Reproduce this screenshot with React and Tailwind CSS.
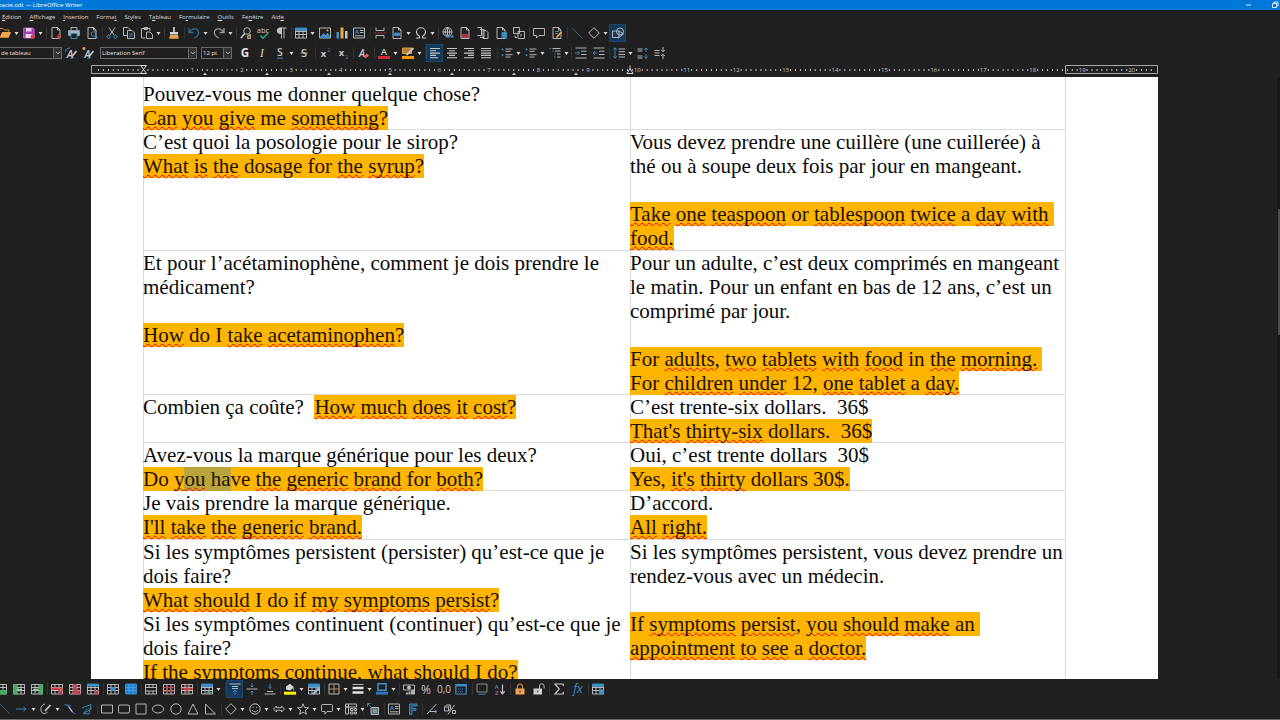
import React from "react";

const G = "#c6c6c6";
const B = "#3c8fc7";
const R = "#d0404c";

/* ---------- icon drawings, 12 x 12 ---------- */

const T = ({ x, y, s, c = G, w = 400, i, f = "Open Sans", children }) => (
  <text x={x} y={y} fontSize={s} fill={c} stroke="none" fontWeight={w} fontStyle={i ? "italic" : "normal"} textAnchor="middle" fontFamily={`"${f}", sans-serif`}>
    {children}
  </text>
);

const grid = (
  <path d="M.5 1.5h11v9.500h-11zM.5 4.500h11M.5 7.500h11M4 1.500v9.500M8 1.500v9.500" />
);
const doc = <path d="M2 .5h5.500L10 3v8.500H2zM7.500.5V3H10" />;
const lines = (a, b) => (
  <path d={`M1 1.500h10M${a} 3.800h${b}M1 6.100h10M${a} 8.400h${b}M1 10.700h10`} strokeWidth="1.100" />
);
const cross = <path d="M7.500 7l4 4.500M11.500 7l-4 4.500" stroke={R} strokeWidth="1.300" />;
const list = (
  <>
    <path d="M4.500 2h7M4.500 4.300h5M4.500 7.700h7M4.500 10h5" />
    <path d="M.5 2.500h2M.5 8.200h2M1.500 1.500v2M1.500 7.200v2" stroke={B} />
  </>
);

const ICONS = {
  open: (
    <>
      <path d="M0 10.500V1.500h4l1.500 1.500H10v2" stroke="#e8963a" />
      <path d="M.5 10.800L3 5h9l-2.300 5.800z" fill="#f0a54a" stroke="none" />
    </>
  ),
  save: (
    <>
      <path d="M.5 1h9.500l1.200 1.500V11H.5z" fill="#a33fae" stroke="#b95bc4" />
      <path d="M3 1h5.500v3.500H3zM2.500 7h7v4h-7z" fill="#e6d3ea" stroke="none" />
      <circle cx="9.800" cy="9.500" r="2.200" fill="#d9434f" stroke="none" />
    </>
  ),
  pdf: <>{doc}<path d="M9 6.500v4.500M7 9l2 2.200L11 9" stroke={R} strokeWidth="1.400" /></>,
  print: (
    <>
      <path d="M3 3V.5h6V3" />
      <path d="M.5 3.500h11v5H.5z" fill="#a5b5bf" stroke="#8fa5b2" />
      <path d="M3 6.500h6v5H3z" fill="#202020" stroke={B} />
    </>
  ),
  preview: <>{doc}<circle cx="7.500" cy="7" r="2.300" stroke={B} /><path d="M9.200 8.800l2.300 2.400" stroke={B} strokeWidth="1.300" /></>,
  cut: (
    <>
      <path d="M3 .5l5.300 8M9 .5l-5.300 8" />
      <circle cx="2.600" cy="9.800" r="1.600" stroke={B} />
      <circle cx="9.400" cy="9.800" r="1.600" stroke={B} />
    </>
  ),
  copy: <><path d="M.5.500h4.500l2 2V8.500H.5z" /><path d="M4.500 3.500h4.500l2.500 2.500v5.500h-7z" fill="#202020" /><path d="M6 7h4M6 9h4" stroke={B} /></>,
  paste: <><path d="M9 4V1.500H.5v9.500h4M3 2.500V.5h3.500v2z" /><path d="M5.500 5h3.500l2.500 2.500v4h-6z" /></>,
  brush: (
    <>
      <path d="M6 0v5" strokeWidth="1.800" />
      <path d="M2 5h8v2.500H2z" fill="#d8d8d8" stroke="none" />
      <path d="M2 8h8l.8 3.800H1.200z" fill="#f0a54a" stroke="none" />
    </>
  ),
  undo: <path d="M1 1v4.500h4.500M1 5.500C3.500 1.500 8 .8 10 3.500c2 3-1 6.500-4 7.500" stroke="#2f6c96" strokeWidth="1.300" />,
  redo: <path d="M11 1v4.500H6.500M11 5.500C8.500 1.500 4 .8 2 3.500c-2 3 1 6.500 4 7.500" stroke="#9a9a9a" strokeWidth="1.300" />,
  find: <><circle cx="7" cy="4" r="3.300" /><path d="M4.700 6.500L.8 11.200" strokeWidth="1.600" /><T x="9" y="11.800" s="7" w={700}>d</T></>,
  spell: <><T x="6" y="6" s="7.500">abc</T><path d="M3.500 8.500l2.500 2.700 5-5" stroke="#2fae74" strokeWidth="1.300" /></>,
  pilcrow: <><path d="M6.500 1v10.500M9 1v10.500M4.500 1h7" /><path d="M6.500 1H5a2.700 2.700 0 000 5.500h1.500z" fill={G} /></>,
  table: <>{grid}<path d="M.5 1h11v2.500H.5z" fill={B} stroke={B} /></>,
  image: <><path d="M.5 1h11v10H.5z" /><path d="M1 10.500l3.500-4 2 2 2-2.500 2.700 4.500z" fill={B} stroke={B} /><circle cx="8.500" cy="3.500" r="1" fill="#f0a54a" stroke="none" /></>,
  chart: <><path d="M.5 5h2.500v6.500H.5z" fill={B} stroke="none" /><path d="M4.500.500h3v11h-3z" fill="#f0a54a" stroke="none" /><path d="M9 4h2.500v7.500H9z" fill={G} stroke="none" /></>,
  textbox: <><path d="M.5 1h11v10H.5z" /><T x="4" y="7" s="6" c={B} w={700}>A</T><path d="M7 3.500h3.500M7 5.500h3.500M2 8.800h8.500" /></>,
  pagebreak: <><path d="M2 .5v3h8v-3M2 11.500v-3h8v3" /><path d="M.5 6h11" stroke={R} strokeDasharray="2 1" /></>,
  field: <>{doc}<path d="M3.500 6h5v2.500h-5z" fill={B} stroke={B} /></>,
  omega: <path d="M.8 11H4.500V9.300C2.700 8.300 1.500 6.800 1.500 5a4.500 4.200 0 019 0c0 1.800-1.200 3.300-3 4.300V11h3.700" strokeWidth="1.100" />,
  link: <><circle cx="5.500" cy="5" r="4.500" /><path d="M1 5h9M5.500.500v9M5.500.500C2.500 3 2.500 7 5.500 9.500M5.500.500C8.500 3 8.500 7 5.500 9.500" /><path d="M4.500 9.500h3M8.500 9.500h3" stroke={B} strokeWidth="2.200" /></>,
  footnote: <>{doc}<path d="M3.500 7.500h5.500v3H3.500z" fill="#8d3446" stroke={R} /></>,
  endnote: <path d="M.5.500h4v8h-4M3 2.500h4v8H3M6 3.500h3l2 2v6H6z" />,
  bookmark: <>{doc}<path d="M7 5.500h4.500v6L9.200 9.500 7 11.500z" fill={B} stroke={B} /></>,
  crossref: <><path d="M.5.500h6v6h-6zM5 4.500h6.500v7H5z" /><path d="M2 8.500v2h2M8 7v2.500" /></>,
  comment: <path d="M.5 1.500h11v7H6L3.500 11V8.500h-3z" />,
  track: <>{doc}<path d="M4 4.500h4M4 6.500h3" stroke={B} /><path d="M5.500 10.500l5-5.500" stroke="#f0a54a" strokeWidth="1.800" /></>,
  line: <path d="M1 1l10 10" stroke="#2f6c96" />,
  diamond: <path d="M6 .7L11.300 6 6 11.300.7 6z" />,
  shapes: <><path d="M.5 4h6.500v6.500H.5z" /><circle cx="8" cy="4.500" r="3.500" /><path d="M7 4l4.500 3-5 4" /></>,
  styleUpd: <><T x="5" y="10.500" s="11" i w={600}>A</T><path d="M7 9.500L11.500 4" strokeWidth="1.700" /><path d="M.5 5C.5 2 2 1 5 1M5.500 11.500c2 0 3-.5 3.500-1.500" stroke={B} /></>,
  styleNew: <><T x="5.500" y="10.500" s="10" i w={600}>A</T><path d="M7 9.500L11.500 4" strokeWidth="1.700" /><path d="M.5 1.500h3M2 0v3" stroke="#f0a54a" strokeWidth="1.600" /><path d="M5.500 11.500c2 0 3-.5 3.500-1.500" stroke={B} /></>,
  bold: <T x="6" y="10" s="11.500" c="#e4e4e4" w={700}>G</T>,
  italic: <T x="6" y="10" s="11.500" c="#d4d4d4" i f="Liberation Serif">I</T>,
  under: <><T x="6" y="9" s="10.500" w={600}>S</T><path d="M3 11.200h6" stroke={B} /></>,
  strike: <><T x="6" y="10" s="11" w={600}>S</T><path d="M2.500 6h7" /></>,
  sup: <><T x="4.500" y="10" s="9.500" w={700}>x</T><T x="10" y="5" s="5" c={B}>2</T></>,
  sub: <><T x="4.500" y="9" s="9.500" w={700}>x</T><T x="10" y="11.500" s="5" c={B}>2</T></>,
  clear: <><T x="5" y="9.500" s="10" i w={600}>A</T><path d="M6.500 9.500l3.500-3 2 2-3.500 3z" fill="#e0606c" stroke="none" /></>,
  color: <><T x="6" y="8" s="9.500" w={600}>A</T><path d="M0 10.500h12" stroke="#d32f3a" strokeWidth="3" /></>,
  mark: <><path d="M.5 1h9v5.500h-9z" fill="#b87f35" stroke="#f0a54a" /><path d="M4.500 8l7-7" strokeWidth="1.800" /><path d="M0 10.500h12" stroke="#ff9800" strokeWidth="3" /></>,
  left: <path d="M1 1.500h10M1 3.800h6M1 6.100h10M1 8.400h6M1 10.700h8" strokeWidth="1.100" />,
  center: lines(3, 6),
  right: lines(5, 6),
  justify: lines(1, 10),
  bullets: list,
  numbers: list,
  outline: <><path d="M3.500 1.500h8M6 4h5.500M8 7h3.500M8 10h3.500" /><path d="M.5 1.500h1.500M3 4h1.500M5 7h1.500M5 10h1.500" stroke={B} /></>,
  indent: <><path d="M.5 1h11M6 4.200h5.500M6 7.500h5.500M.5 11h11" /><path d="M0 6h4.500M2.500 4l2 2-2 2" stroke={B} /></>,
  outdent: <><path d="M.5 1h11M6 4.200h5.500M6 7.500h5.500M.5 11h11" /><path d="M0 6h4.500M2 4L0 6l2 2" stroke={B} /></>,
  spacing: <><path d="M5.500 2H12M5.500 4.700H12M5.500 7.400H12M5.500 10H12" /><path d="M2 .8v10.400M.3 2.800L2 .8l1.700 2M.3 9.200l1.700 2 1.700-2" stroke={B} /></>,
  paraInc: <><path d="M.5 2h5M.5 4h5M.5 9h5M.5 11h5" /><path d="M9 5V1M7.200 2.800L9 1l1.800 1.800M9 7v4.500M7.200 9.500L9 11.500l1.800-2" stroke={B} /></>,
  paraDec: <><path d="M.5 3.500h5M.5 6h5M.5 8.500h5" /><path d="M9 0v4.500M7.200 3L9 4.800 10.800 3M9 12V7.500M7.200 9L9 7.200 10.800 9" /></>,
  rowIns: <>{grid}<path d="M5 7h6.500v4.500H5z" fill="#3fae62" stroke="none" /></>,
  colBefore: <>{grid}<path d="M.2 1h3.500v10.500H.2z" fill="#3fae62" stroke="none" /><path d="M4 6.500h5M6 4.500l-2 2 2 2" stroke="#8fe0a6" /></>,
  colAfter: <>{grid}<path d="M8.300 1h3.500v10.500H8.300z" fill="#3fae62" stroke="none" /><path d="M2 6.500h5M5 4.500l2 2-2 2" stroke="#8fe0a6" /></>,
  rowDel: <>{grid}<path d="M.5 4.500h11v2.500H.5z" fill={R} stroke="none" />{cross}</>,
  colDel: <>{grid}<path d="M4.200 1h3.500v10.500H4.200z" fill={R} stroke="none" />{cross}</>,
  tableDel: <>{grid}<path d="M.5 1h11v2H.5z" fill={B} stroke={B} />{cross}</>,
  cellSel: <>{grid}<path d="M4 4.500h4v3H4z" fill={B} stroke={B} /></>,
  tableSel: <><path d="M.5 1h11v10H.5z" fill="#1f82d6" stroke={B} /><path d="M.5 4.500h11M.5 7.500h11M4 1v10M8 1v10" stroke="#3fa0ec" /></>,
  merge: <><path d="M.5 1.500h11v9.500h-11zM.5 4.500h11M.5 8h11M4 1.500v3M8 1.500v3M4 8v3M8 8v3" /></>,
  splitCell: <>{grid}<path d="M4 4.500h4v3.500H4zM.5 4.500h11M.5 8h11" stroke={R} /></>,
  splitTable: <>{grid}<path d="M0 6h12M6 1v10.500" stroke={R} strokeWidth="1.400" /></>,
  optimize: <>{grid}<path d="M.5 1h11v2.500H.5z" fill={B} stroke={B} /><path d="M6 9.500h5.500M7.500 8L6 9.500 7.500 11" stroke="#4fb3a3" /></>,
  vtop: <><path d="M.5 1h11M3 3.500h6M3 5.500h6" /><path d="M6 11.500V7M4 9l2-2 2 2" stroke={B} /></>,
  vmid: <><path d="M.5 6h11" /><path d="M6 0v4M4.500 2.500L6 4l1.500-1.500M6 12V8M4.500 9.500L6 8l1.500 1.500" stroke={B} /></>,
  vbot: <><path d="M.5 11h11M3 8.500h6" /><path d="M6 .5v5M4.300 4L6 5.500 7.700 4" stroke={B} /></>,
  fill: <><path d="M2 3.500L6 .8l4 3.500-4 3.200-4-1z" fill="#d8d8d8" stroke="none" /><path d="M9.500 4.500v3" stroke={B} strokeWidth="1.500" /><path d="M0 10.200h12" stroke="#fff200" strokeWidth="3" /></>,
  autofmt: <>{grid}<path d="M.5 1h11v3H.5z" fill={B} stroke={B} /><path d="M5 11l6-6" stroke="#8cc3e8" strokeWidth="2" /></>,
  borders: <><path d="M1 1h10v10H1z" /><path d="M6 1v10M1 6h10" stroke="#c9a27a" /></>,
  bstyle: <><path d="M.5 1.500h11" /><path d="M.5 5h11M.5 9.500h11" strokeWidth="2.500" stroke="#e0e0e0" /></>,
  bcolor: <><path d="M2 .8h8v6.500H2z" stroke={B} strokeWidth="1.500" /><path d="M0 10.200h12" stroke="#2a76c0" strokeWidth="3" /></>,
  currency: <><path d="M.5 2h11v5H.5z" /><circle cx="6" cy="4.500" r="1.500" fill={G} /><path d="M4 11.500V9.500M6.500 11.500V8.500M9 11.500V7.500M11 11.500V7" strokeWidth="1.800" /></>,
  percent: <T x="6" y="10.500" s="12">%</T>,
  decimal: <T x="6" y="10" s="10">0,0</T>,
  numfmt: <><path d="M.8 1.500h10.400v9.500H.8z" stroke={B} strokeWidth="1.200" /><path d="M1 2.500h10" stroke={B} strokeWidth="2" /><path d="M3 6h6M3 8.500h6" stroke={B} strokeDasharray="1 1" /></>,
  caption: <><path d="M1 1h10v8H1z" stroke="#9a9a9a" /><path d="M2.500 11.200h7" stroke={B} /></>,
  sort: <><T x="2.800" y="5.500" s="6" c={B} w={600}>A</T><T x="2.800" y="11.800" s="6" c="#b060c0" w={600}>Z</T><path d="M8.500 1.500v9M6.300 8.300l2.200 2.500 2.200-2.500" strokeWidth="1.200" /></>,
  lock: <><path d="M3.500 6V3.500a2.500 2.500 0 015 0V6" stroke="#c98a4a" strokeWidth="1.200" /><path d="M1.500 5.500h9v6h-9z" fill="#efa552" stroke="none" /><path d="M6 7.500v2" stroke="#202020" /></>,
  unlock: <><path d="M6.500 6V3a2.300 2.300 0 014.600 0v2.500" /><path d="M.5 5.500h8.500v6H.5z" fill="#d0d0d0" stroke="none" /><path d="M4.700 7.500v2" stroke="#202020" /></>,
  sum: <path d="M10.200 3V1H2l4.300 5L2 11h8.200V9" strokeWidth="1.200" />,
  fx: <T x="6" y="9.500" s="12" c={B} i>fx</T>,
  tprops: <>{grid}<path d="M.5 1h11v2.500H.5z" fill={B} stroke={B} /><circle cx="9.500" cy="9" r="2.300" fill={B} stroke={B} /></>,
  arrow: <path d="M0 6h10M7.500 4l2.500 2-2.500 2" stroke={B} />,
  curve: <><path d="M5 1C1 2 0 6 1.500 9c1 2 4 2 6 0" /><path d="M5 8l5.500-6" strokeWidth="1.800" /></>,
  connector: <><path d="M.5 1.500l3 1 5 7 3 1M4 3.500V1M4 3H7" stroke={B} /><path d="M5 4l3.500 5" strokeWidth="1.200" /></>,
  poly: <path d="M1 5l9-3.500-2 9.500-5.500-.5 3.500-4.500M2 11l9-6" stroke={B} />,
  rect: <path d="M.5 2h11v8H.5z" />,
  rrect: <rect x=".5" y="2" width="11" height="8" rx="1.500" />,
  square: <path d="M1 1h10v10H1z" />,
  ellipse: <ellipse cx="6" cy="6" rx="5.500" ry="4" />,
  circle: <circle cx="6" cy="6" r="5.200" />,
  tri: <path d="M6 1l5 10H1z" />,
  rtri: <path d="M1.500 1v10h10z" />,
  smile: <><circle cx="6" cy="6" r="5.200" /><path d="M3.200 7.200c1 2.200 4.600 2.200 5.600 0M4.200 3.800v1.200M7.800 3.800v1.200" /></>,
  darrow: <path d="M.5 6L3.500 3v1.700h5V3l3 3-3 3V7.300h-5V9z" />,
  star: <path d="M6 .8l1.500 3.700 4 .3-3.100 2.500 1 3.900L6 9.100l-3.400 2.100 1-3.900L.5 4.800l4-.3z" />,
  callout: <path d="M1.500 1.500h9q1 0 1 1v5q0 1-1 1H6L4 11.200V8.500H1.500q-1 0-1-1v-5q0-1 1-1z" />,
  flow: <path d="M.5 1h3v3h-3zM3.500 1h8v3h-8zM.5 4h3v7h-3zM5.500 5.500h2.500v2h-2.500zM9.500 5.500h2v2h-2zM5.500 9h2.500v2h-2.500zM9.500 9h2v2h-2z" />,
  callShape: <><path d="M4 4.500h7.500v7H4z" fill="#506a7a" /><path d="M.5.500l4 4M.5.500v3M.5.500h3" stroke={B} /><path d="M6 7h4M6 9h4" /></>,
  fontwork: <path d="M3.500 1v10.500h2.500V7.500h4V5.500H6V3h5V1z" fill="#24506e" stroke={B} />,
  points: <><path d="M1 11L10.500 1M4 8.500h6.500" /><path d="M8.500 6.500l2.500 2-2.500 2" stroke={B} /></>,
  extrude: <><path d="M.5 4h4v4h-4zM.5 4l2-2h4v4l-2 2M4.500 4l2-2" /><path d="M4 11.500L10.500 2M8.500 7.500h3v3h-3z" /></>,
};

const Icon = ({ name }) => (
  <svg viewBox="0 0 12 12" className="size-3 shrink-0 overflow-visible" fill="none" stroke={G} strokeWidth=".9" aria-hidden="true">
    {ICONS[name]}
  </svg>
);

/* ---------- toolbars ---------- */

/* Names ending in "+" carry a drop-down arrow, names starting with "*" are switched on. */
function Tool({ spec }) {
  const drop = spec.endsWith("+");
  const on = spec.startsWith("*");
  const name = spec.replace(/[*+]/g, "");
  return (
    <span className="flex items-center">
      <button
        type="button"
        aria-label={name}
        className={`flex h-[18px] w-[17px] items-center justify-center ${on ? "border border-[#1b4a70] bg-[#15395a]" : ""}`}
      >
        <Icon name={name} />
      </button>
      {drop && (
        <button type="button" aria-label={`${name} options`} className="flex w-[7px] items-center justify-center">
          <svg viewBox="0 0 5 3" className="h-[3px] w-[5px]" aria-hidden="true">
            <path d="M.5 0h4L2.500 3z" fill="#dcdcdc" />
          </svg>
        </button>
      )}
    </span>
  );
}

function Group({ width, tools, last }) {
  return (
    <div className={`flex shrink-0 justify-between pr-[3px] ${last ? "" : "bg-[linear-gradient(#333,#333)] bg-[length:1px_12px] bg-right bg-no-repeat"} ${width}`}>
      {tools.split(" ").map((t) => (
        <Tool key={t} spec={t} />
      ))}
    </div>
  );
}

function Toolbar({ label, groups, children }) {
  return (
    <div role="toolbar" aria-label={label} className="flex h-5 items-center">
      {children}
      {groups.map(([width, tools], i) => (
        <Group key={tools} width={width} tools={tools} last={i === groups.length - 1} />
      ))}
    </div>
  );
}

const STANDARD = [
  ["w-[51px]", "open+ save+"],
  ["w-[56px]", "pdf print preview"],
  ["w-[62px]", "cut copy paste+"],
  ["w-[20px]", "brush"],
  ["w-[52px]", "undo+ redo+"],
  ["w-[55px]", "find spell pilcrow"],
  ["w-[79px]", "table+ image chart textbox"],
  ["w-[68px]", "pagebreak field+ omega+"],
  ["w-[91px]", "link footnote endnote bookmark crossref"],
  ["w-[38px]", "comment track"],
  ["w-[61px]", "line diamond+ *shapes"],
];
const FORMATTING = [
  ["w-[80px]", "bold italic under+ strike"],
  ["w-[38px]", "sup sub"],
  ["w-[21px]", "clear"],
  ["w-[51px]", "color+ mark+"],
  ["w-[72px]", "*left center right justify"],
  ["w-[74px]", "bullets+ numbers+ outline+"],
  ["w-[38px]", "indent outdent"],
  ["w-[61px]", "spacing+ paraInc paraDec"],
];
const TABLE = [
  ["w-[56px]", "rowIns colBefore colAfter"],
  ["w-[56px]", "rowDel colDel tableDel"],
  ["w-[38px]", "cellSel tableSel"],
  ["w-[56px]", "merge splitCell splitTable"],
  ["w-[28px]", "optimize+"],
  ["w-[55px]", "*vtop vmid vbot"],
  ["w-[44px]", "fill+ autofmt"],
  ["w-[75px]", "borders+ bstyle+ bcolor+"],
  ["w-[73px]", "currency percent decimal numfmt"],
  ["w-[38px]", "caption sort"],
  ["w-[39px]", "lock unlock"],
  ["w-[39px]", "sum fx"],
  ["w-[20px]", "tprops"],
];
const DRAWING = [
  ["w-[102px]", "line arrow+ curve+ connector poly"],
  ["w-[124px]", "rect rrect square ellipse circle tri rtri"],
  ["w-[142px]", "diamond+ smile+ darrow+ star+ callout+ flow+"],
  ["w-[21px]", "callShape"],
  ["w-[38px]", "textbox fontwork"],
  ["w-[38px]", "points extrude"],
];

function Combo({ label, value, className, chevron }) {
  return (
    <div className={`flex h-3 shrink-0 border border-[#6a6a6a] ${className}`}>
      <input
        aria-label={label}
        defaultValue={value}
        className="min-w-0 flex-1 bg-transparent pl-px text-[6px] leading-none text-[#e2e2e2] outline-none"
      />
      <button type="button" aria-label={`${label} list`} className={`flex items-center justify-center border-l border-[#6a6a6a] bg-[#333] ${chevron}`}>
        <svg viewBox="0 0 6 4" className="h-1 w-1.5" fill="none" stroke="#c6c6c6" aria-hidden="true">
          <path d="M1 .8l2 2 2-2" />
        </svg>
      </button>
    </div>
  );
}

/* ---------- menu ---------- */

const MENU = [
  ["", "É", "dition"],
  ["", "A", "ffichage"],
  ["", "I", "nsertion"],
  ["Forma", "t", ""],
  ["St", "y", "les"],
  ["T", "a", "bleau"],
  ["Fo", "r", "mulaire"],
  ["", "O", "utils"],
  ["Fe", "n", "être"],
  ["Aid", "e", ""],
];

/* ---------- ruler ---------- */

const UNIT = 49.43;

function Ruler() {
  const ticks = [];
  for (let i = -10; i <= 205; i++) {
    const x = 52 + (i * UNIT) / 10;
    if (x < 3 || x > 1064 || i % 10 === 0) continue;
    ticks.push(<path key={i} d={`M${x} 4v2`} stroke="#c0c0c0" />);
  }
  const numbers = Array.from({ length: 20 }, (_, i) => i + 1);
  const tabs = [114, 176, 238, 299, 361, 423, 485];
  return (
    <svg viewBox="0 0 1067 12" className="block h-3 w-full" fill="none" aria-hidden="true">
      <path d="M.5.500h52v8H.5zM974.500.500h92v8h-92z" stroke="#a8a8a8" />
      {ticks}
      {numbers.map((n) => (
        <text key={n} x={52 + n * UNIT} y="7" fontSize="6" textAnchor="middle" fill="#c8c8c8" fontFamily='"Open Sans", sans-serif'>
          {n}
        </text>
      ))}
      {tabs.map((x) => (
        <path key={x} d={`M${x - 2} 10h4l-2-2.500z`} fill="#c8c8c8" />
      ))}
      <path d="M49.500.500h6L49.500 8.500h6zM539 .5v3M539 3.500l-3 5h6z" stroke="#d4d4d4" fill="#202020" />
    </svg>
  );
}

/* ---------- document ---------- */

const WAVE = "underline decoration-[#ff0000] decoration-wavy decoration-1 underline-offset-1 [text-decoration-skip-ink:none]";

/* ~word~ marks a word underlined by the spell checker. */
const spell = (text) =>
  text.split("~").map((part, i) =>
    i % 2 ? (
      <span key={i} className={WAVE}>
        {part}
      </span>
    ) : (
      part
    )
  );

const En = ({ children }) => (
  <mark className="inline-block bg-[#ffb400] text-[#1c1200]">
    {typeof children === "string" ? spell(children) : children}
  </mark>
);

const ROWS = [
  {
    h: "h-[52px]",
    left: ["Pouvez-vous me donner quelque chose?", <En>{"~Can~ ~you~ ~give~ me ~something~?"}</En>],
    right: [],
  },
  {
    h: "h-[121px]",
    left: ["C’est quoi la posologie pour le sirop?", <En>{"~What~ ~is~ ~the~ dosage for ~the~ ~syrup~?"}</En>],
    right: [
      "Vous devez prendre une cuillère (une cuillerée) à",
      "thé ou à soupe deux fois par jour en mangeant.",
      "",
      <En>{"~Take~ ~one~ ~teaspoon~ or ~tablespoon~ ~twice~ a ~day~ ~with~ "}</En>,
      <En>{"~food.~"}</En>,
    ],
  },
  {
    h: "h-36",
    left: [
      "Et pour l’acétaminophène, comment je dois prendre le",
      "médicament?",
      "",
      <En>{"~How~ do I ~take~ ~acetaminophen~?"}</En>,
    ],
    right: [
      "Pour un adulte, c’est deux comprimés en mangeant",
      "le matin. Pour un enfant en bas de 12 ans, c’est un",
      "comprimé par jour.",
      "",
      <En>{"For ~adults~, ~two~ ~tablets~ ~with~ ~food~ in ~the~ ~morning.~ "}</En>,
      <En>{"For ~children~ ~under~ 12, ~one~ ~tablet~ a ~day.~"}</En>,
    ],
  },
  {
    h: "h-12",
    left: [<>{"Combien ça coûte?  "}<En>{"~How~ ~much~ ~does~ ~it~ ~cost~?"}</En></>],
    right: ["C’est trente-six dollars.  36$", <En>{"~That's~ ~thirty-six~ dollars.  36$"}</En>],
  },
  {
    h: "h-12",
    left: [
      "Avez-vous la marque générique pour les deux?",
      <En>
        <>
          {"Do "}
          <span className={WAVE}>
            y<span className="bg-[#b9a53c]">ou</span>
          </span>
          <span className="bg-[#b9a53c]">{" ha"}</span>
          {spell("ve ~the~ ~generic~ ~brand~ for ~both~?")}
        </>
      </En>,
    ],
    right: ["Oui, c’est trente dollars  30$", <En>{"Yes, ~it's~ ~thirty~ dollars 30$."}</En>],
  },
  {
    h: "h-[49px]",
    left: ["Je vais prendre la marque générique.", <En>{"~I'll~ ~take~ ~the~ ~generic~ ~brand.~"}</En>],
    right: ["D’accord.", <En>{"~All~ ~right.~"}</En>],
  },
  {
    h: "h-[168px]",
    left: [
      "Si les symptômes persistent (persister) qu’est-ce que je",
      "dois faire?",
      <En>{"~What~ ~should~ I do if ~my~ ~symptoms~ ~persist~?"}</En>,
      "Si les symptômes continuent (continuer) qu’est-ce que je",
      "dois faire?",
      <En>{"~If~ ~the~ ~symptoms~ ~continue~, ~what~ ~should~ I do?"}</En>,
    ],
    right: [
      "Si les symptômes persistent, vous devez prendre un",
      "rendez-vous avec un médecin.",
      "",
      <En>{"If ~symptoms~ ~persist~, ~you~ ~should~ ~make~ an "}</En>,
      <En>{"~appointment~ ~to~ ~see~ a ~doctor.~"}</En>,
    ],
  },
];

function Cell({ lines, first, className }) {
  return (
    <td
      className={`whitespace-pre p-0 align-top ${first ? "pt-1 shadow-[inset_1px_0_0_#dcdcdc]" : "shadow-[inset_1px_1px_0_#dcdcdc]"} ${className}`}
    >
      <div className="-mb-px pt-px">
        {lines.map((line, i) => (
          <div key={i} className="h-6 leading-6">
            {line}
          </div>
        ))}
      </div>
    </td>
  );
}

export default function App() {
  return (
    <div className="flex h-screen flex-col overflow-hidden bg-[#202020] font-['Open_Sans','Noto_Sans',sans-serif] text-[#dedede]">
      <header className="flex h-2.5 shrink-0 items-center justify-between bg-[#0078d7] pr-px">
        <h1 className="-ml-1 whitespace-nowrap text-[6px] leading-[8px] text-white">macie.odt — LibreOffice Writer</h1>
        <div className="flex gap-[18px]">
          <button type="button" aria-label="Minimize" className="flex size-2 items-center">
            <svg viewBox="0 0 8 8" className="size-2" stroke="#d8ebfb" aria-hidden="true">
              <path d="M1 4h5" />
            </svg>
          </button>
          <button type="button" aria-label="Restore" className="flex size-2 items-center">
            <svg viewBox="0 0 8 8" className="size-2" stroke="#d8ebfb" fill="none" aria-hidden="true">
              <path d="M1.500 2.500h4v4h-4zM3 2.500V1h4v4H5.500" />
            </svg>
          </button>
        </div>
      </header>

      <nav className="flex h-[13px] shrink-0 items-center gap-2 pl-0.5 text-[6px] leading-none">
        {MENU.map(([a, u, b]) => (
          <button key={a + u + b} type="button">
            {a}
            <span className="underline">{u}</span>
            {b}
          </button>
        ))}
      </nav>

      <div className="-ml-1 shrink-0">
        <Toolbar label="Standard" groups={STANDARD} />
      </div>
      <Toolbar label="Formatting" groups={FORMATTING}>
        <Combo label="Style" value="de tableau" className="-ml-px w-[63px]" chevron="w-2" />
        <div className="flex w-[38px] shrink-0">
          <Tool spec="styleUpd" />
          <Tool spec="styleNew" />
        </div>
        <Combo label="Font" value="Liberation Serif" className="mr-1 w-[97px]" chevron="w-2" />
        <Combo label="Size" value="12 pt" className="mr-1 w-[31px]" chevron="w-2" />
      </Toolbar>

      <div className="mr-[122px] ml-[91px] mt-0.5 shrink-0">
        <Ruler />
      </div>

      <main className="flex min-h-0 flex-1 overflow-hidden">
        <div className="mr-[119px] ml-[91px] min-w-0 flex-1 overflow-hidden bg-white pr-[92px] pl-[52px]">
          <table className="w-full table-fixed border-separate border-spacing-0 font-['Liberation_Serif',serif] text-[21px] text-[#0a0a0a]">
            <colgroup>
              <col className="w-[487px]" />
              <col />
            </colgroup>
            <tbody>
              {ROWS.map((row, i) => (
                <tr key={i} className={row.h}>
                  <Cell lines={row.left} first={i === 0} className="" />
                  <Cell lines={row.right} first={i === 0} className="border-r border-[#dcdcdc]" />
                </tr>
              ))}
            </tbody>
          </table>
        </div>
        <div className="flex w-[3px] shrink-0 flex-col bg-[#171717] pt-[132px] pl-px">
          <div className="h-[126px] bg-[#4d4d4d]" />
        </div>
      </main>

      <footer className="shrink-0 border-b border-[#6e6e6e]">
        <div className="-ml-2">
          <Toolbar label="Table" groups={TABLE} />
        </div>
        <div className="-ml-1">
          <Toolbar label="Drawing" groups={DRAWING} />
        </div>
      </footer>
    </div>
  );
}
